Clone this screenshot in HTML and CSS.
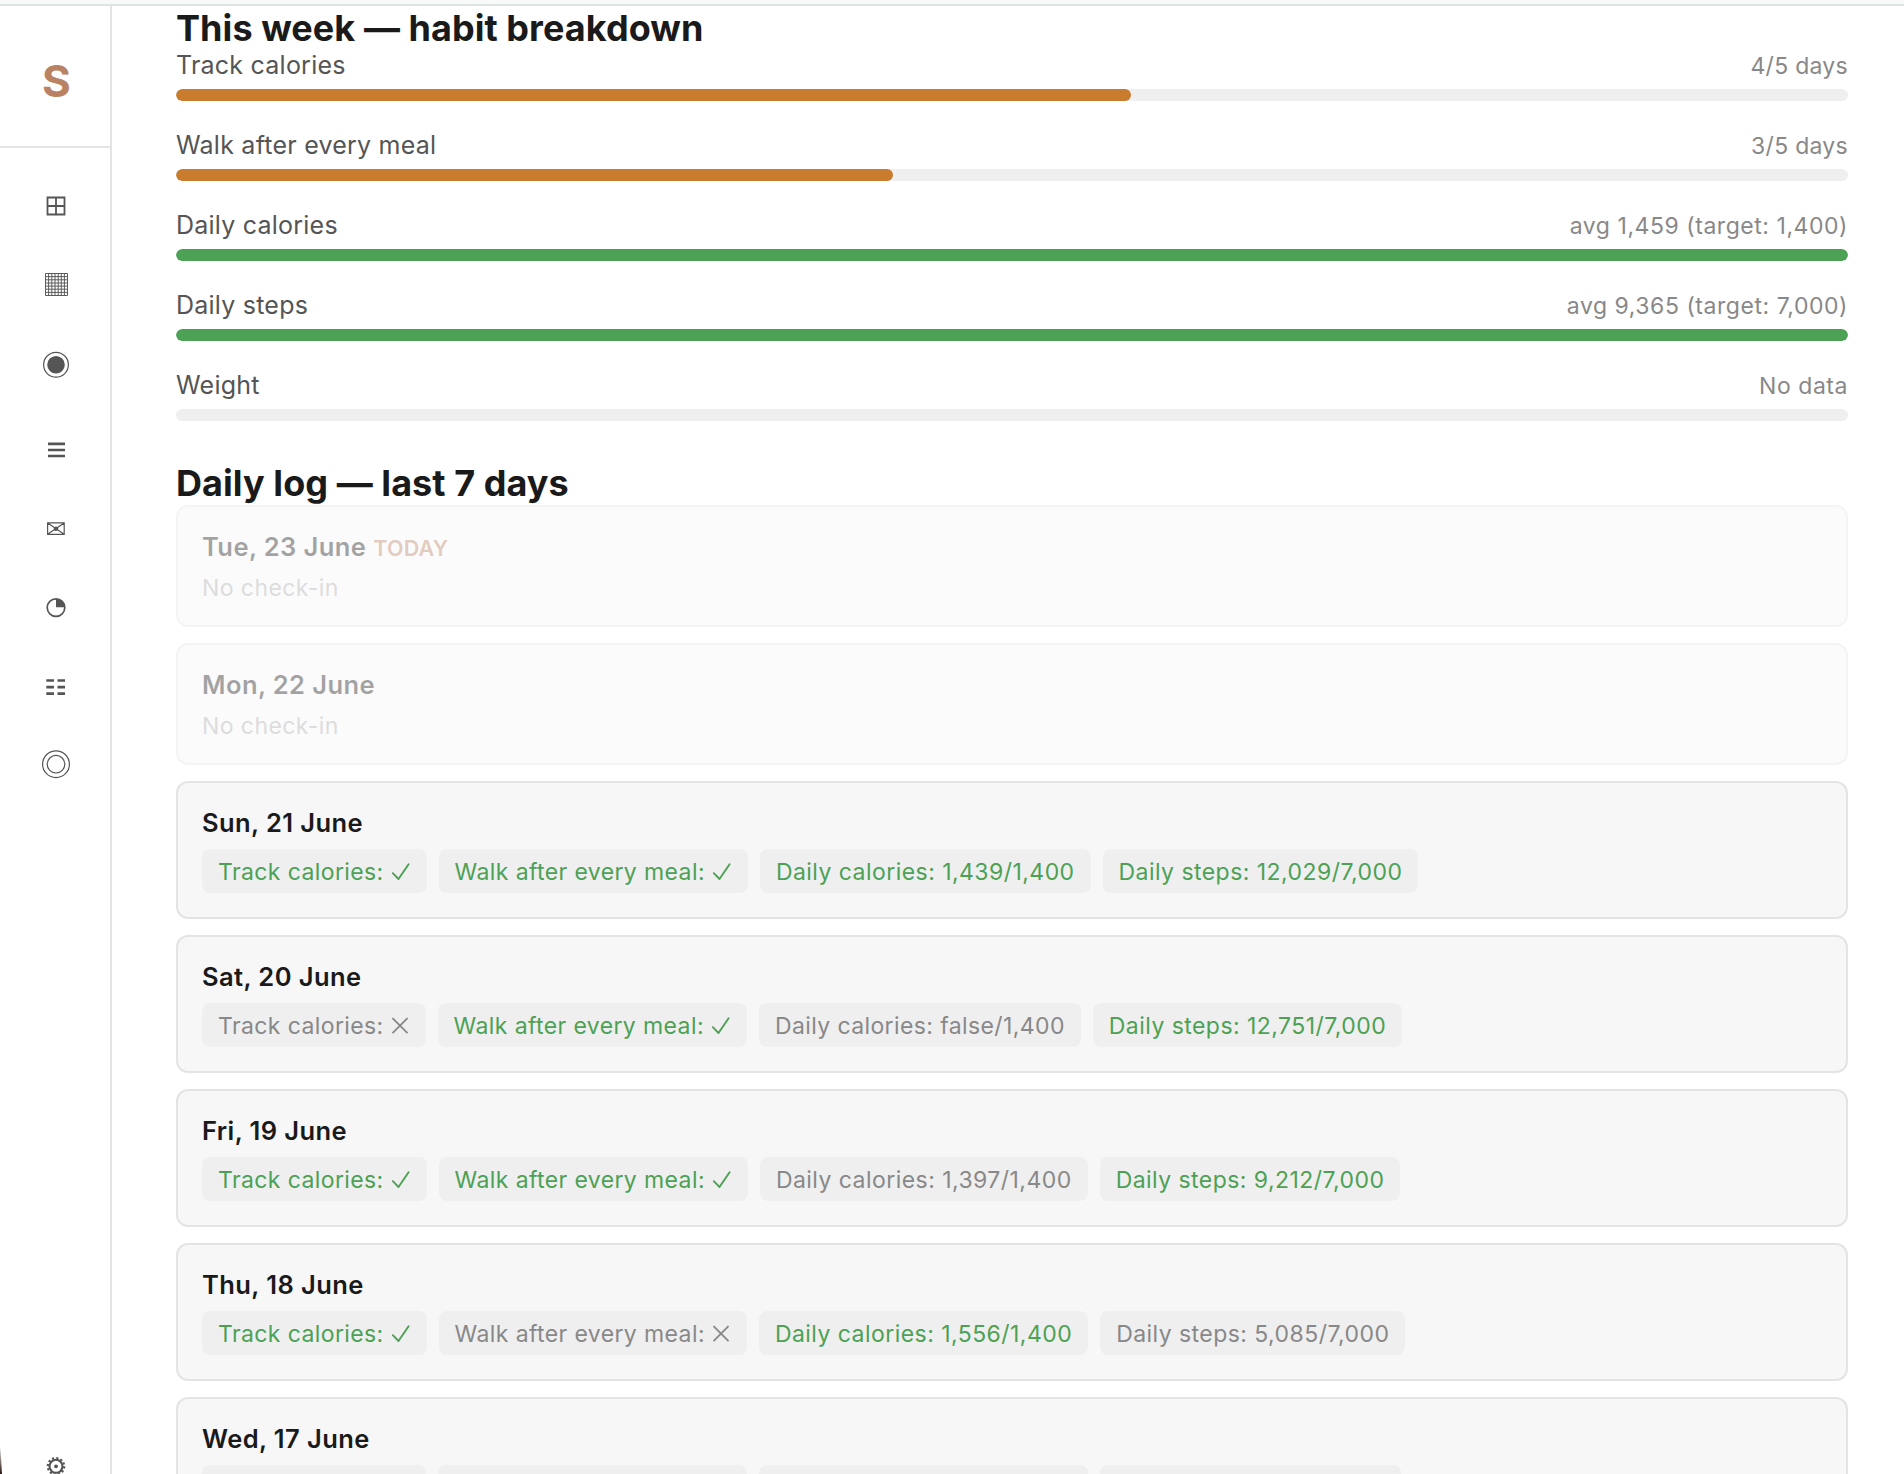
FILE: index.html
```html
<!DOCTYPE html>
<html lang="en">
<head>
<meta charset="utf-8">
<title>Habit breakdown</title>
<link rel="stylesheet" href="styles.css">
</head>
<body>
<svg class="defs" width="0" height="0">
  <symbol id="check" viewBox="0 0 20 44"><path d="M1.800 24.200L7.500 30L17.600 15.200" fill="none" stroke="currentColor" stroke-width="1.900" stroke-linecap="round" stroke-linejoin="round"/></symbol>
  <symbol id="cross" viewBox="0 0 19 44"><path d="M2 15.600L16 29.600M16 15.600L2 29.600" fill="none" stroke="currentColor" stroke-width="1.900" stroke-linecap="round"/></symbol>
</svg>
<div class="topbar"></div>
<div class="app">
  <aside class="sidebar">
    <div class="logo">S</div>
    <nav class="nav">
      <svg class="nav-icon" viewBox="0 0 110 80"><path d="M47.500 31.500h17v17h-17zM56 31.500v17M47.500 40h17" fill="none" stroke="#555" stroke-width="1.800"/></svg>
      <svg class="nav-icon" viewBox="0 0 110 80"><path d="M45.500 27.500h22v22h-22zM48.600 27.500v22M51.800 27.500v22M55 27.500v22M58.200 27.500v22M61.300 27.500v22M64.400 27.500v22M45.500 30.600h22M45.500 33.800h22M45.500 37h22M45.500 40.100h22M45.500 43.200h22M45.500 46.400h22" fill="none" stroke="#555" stroke-width=".95"/></svg>
      <svg class="nav-icon" viewBox="0 0 110 80"><circle cx="56" cy="38.800" r="12.400" fill="none" stroke="#555" stroke-width="1.200"/><circle cx="56" cy="38.800" r="8.800" fill="#555"/></svg>
      <svg class="nav-icon" viewBox="0 0 110 80"><path d="M48 37.800h17M48 44h17M48 50h17" stroke="#555" stroke-width="2.700"/></svg>
      <svg class="nav-icon" viewBox="0 0 110 80"><path d="M47.600 36.900h16.600v11.400H47.600zM47.600 36.900l16.600 11.400M64.200 36.900L47.600 48.300" fill="none" stroke="#555" stroke-width="1.200"/><circle cx="56" cy="42.700" r="2.300" fill="#555"/></svg>
      <svg class="nav-icon" viewBox="0 0 110 80"><circle cx="56" cy="41.600" r="8.800" fill="none" stroke="#555" stroke-width="1.700"/><path d="M56 41.200V32.700a8.900 8.900 0 0 1 8.900 8.500z" fill="#555"/></svg>
      <svg class="nav-icon" viewBox="0 0 110 80"><path d="M46.300 34.500h7.700M57.500 34.500h7.500M46.300 41.100h7.700M57.500 41.100h7.500M46.300 47.600h7.700M57.500 47.600h7.500" stroke="#555" stroke-width="2.700"/></svg>
      <svg class="nav-icon" viewBox="0 0 110 80"><g fill="none" stroke="#555" stroke-width="1.200"><circle cx="56" cy="38.200" r="13.400"/><circle cx="56" cy="38.200" r="8.800"/></g></svg>
    </nav>
    <svg class="gear" viewBox="0 0 110 24"><g fill="none" stroke="#555"><circle cx="56" cy="16.300" r="6.500" stroke-width="2.100"/><circle cx="56" cy="16.300" r="8.200" stroke-width="2.200" stroke-dasharray="2.150 2.143"/></g><circle cx="56" cy="16.300" r="1.900" fill="#555"/></svg>
  </aside>
  <main class="content">
    <h2 class="title">This week — habit breakdown</h2>
    <section class="habits">
      <div class="habit"><div class="habit-row"><span>Track calories</span><span class="value days">4/5 days</span></div><div class="bar"><div class="fill orange" style="width:57.1%"></div></div></div>
      <div class="habit"><div class="habit-row"><span>Walk after every meal</span><span class="value days">3/5 days</span></div><div class="bar"><div class="fill orange" style="width:42.9%"></div></div></div>
      <div class="habit"><div class="habit-row"><span>Daily calories</span><span class="value">avg 1,459 (target: 1,400)</span></div><div class="bar"><div class="fill green" style="width:100%"></div></div></div>
      <div class="habit"><div class="habit-row"><span>Daily steps</span><span class="value">avg 9,365 (target: 7,000)</span></div><div class="bar"><div class="fill green" style="width:100%"></div></div></div>
      <div class="habit"><div class="habit-row"><span>Weight</span><span class="value">No data</span></div><div class="bar"></div></div>
    </section>
    <h2 class="title">Daily log — last 7 days</h2>
    <section class="log">
      <article class="card empty"><div class="date">Tue, 23 June <span class="today">TODAY</span></div><div class="none">No check-in</div></article>
      <article class="card empty"><div class="date">Mon, 22 June</div><div class="none">No check-in</div></article>
      <article class="card"><div class="date">Sun, 21 June</div><div class="chips"><span class="chip ok">Track calories: <svg class="mark"><use href="#check"/></svg></span><span class="chip ok">Walk after every meal: <svg class="mark"><use href="#check"/></svg></span><span class="chip num ok">Daily calories: 1,439/1,400</span><span class="chip num ok">Daily steps: 12,029/7,000</span></div></article>
      <article class="card"><div class="date">Sat, 20 June</div><div class="chips"><span class="chip">Track calories: <svg class="mark x"><use href="#cross"/></svg></span><span class="chip ok">Walk after every meal: <svg class="mark"><use href="#check"/></svg></span><span class="chip">Daily calories: false/1,400</span><span class="chip num ok">Daily steps: 12,751/7,000</span></div></article>
      <article class="card"><div class="date">Fri, 19 June</div><div class="chips"><span class="chip ok">Track calories: <svg class="mark"><use href="#check"/></svg></span><span class="chip ok">Walk after every meal: <svg class="mark"><use href="#check"/></svg></span><span class="chip num">Daily calories: 1,397/1,400</span><span class="chip num ok">Daily steps: 9,212/7,000</span></div></article>
      <article class="card"><div class="date">Thu, 18 June</div><div class="chips"><span class="chip ok">Track calories: <svg class="mark"><use href="#check"/></svg></span><span class="chip">Walk after every meal: <svg class="mark x"><use href="#cross"/></svg></span><span class="chip num ok">Daily calories: 1,556/1,400</span><span class="chip num">Daily steps: 5,085/7,000</span></div></article>
      <article class="card"><div class="date">Wed, 17 June</div><div class="chips"><span class="chip" style="width:224px"></span><span class="chip" style="width:309px"></span><span class="chip" style="width:329px"></span><span class="chip" style="width:301px"></span></div></article>
    </section>
  </main>
</div>
<div class="corner"></div>
</body>
</html>
```
FILE: styles.css
```css
* { box-sizing: border-box; }
body {
  margin: 0;
  height: 1474px;
  overflow: hidden;
  display: flex;
  flex-direction: column;
  background: #fff;
  color: #1a1a1a;
  font-family: Inter, "Liberation Sans", sans-serif;
}
.defs { position: absolute; }
.topbar { flex: none; height: 6px; background: #f7faf8; border-bottom: 2px solid #dde5e0; }
.app { flex: 1; min-height: 0; display: flex; }
.sidebar { flex: none; width: 112px; border-right: 2px solid #e4e4e4; display: flex; flex-direction: column; }
.logo {
  height: 142px;
  padding: 47px 0 0 3px;
  border-bottom: 2px solid #e4e4e4;
  text-align: center;
  font-size: 44px;
  line-height: 56px;
  font-weight: 700;
  color: #b98262;
}
.nav { display: flex; flex-direction: column; padding-top: 18px; }
.nav-icon { display: block; width: 110px; height: 80px; }
.gear { display: block; width: 110px; height: 24px; margin-top: auto; }
.content { flex: 1; min-width: 0; padding: 0 56px 0 64px; overflow: hidden; }
.title { margin: 0; height: 44px; font-size: 36px; line-height: 44px; font-weight: 700; letter-spacing: 0.06px; }
.habits { display: flex; flex-direction: column; gap: 28px; margin-bottom: 39px; }
.habit { height: 52px; }
.habit-row { display: flex; justify-content: space-between; align-items: baseline; height: 39px; font-size: 25px; line-height: 30px; letter-spacing: 0.23px; color: #555; }
.value { font-size: 23px; color: #888; letter-spacing: 0.54px; }
.value.days { letter-spacing: 0.28px; }
.bar { height: 12px; border-radius: 6px; background: #efefef; overflow: hidden; }
.fill { height: 100%; border-radius: 6px; }
.orange { background: #c97b2e; }
.green { background: #4ca154; }
.log { display: flex; flex-direction: column; gap: 16px; }
.card { flex: none; height: 138px; padding: 24px; border: 2px solid #e4e4e4; border-radius: 12px; background: #f7f7f7; }
.card.empty { height: 122px; opacity: .4; }
.date { height: 42px; font-size: 25.5px; line-height: 32px; font-weight: 600; letter-spacing: 0.42px; }
.today { font-size: 21.5px; font-weight: 600; letter-spacing: 0.2px; color: #b98262; }
.none { font-size: 23px; line-height: 30px; letter-spacing: 0.42px; color: #aaa; }
.chips { display: flex; gap: 12px; }
.chip { display: flex; gap: 7px; height: 44px; padding: 0 16px; border-radius: 8px; background: #efefef; font-size: 23px; line-height: 46px; letter-spacing: 0.39px; color: #888; white-space: nowrap; }
.chip.num { letter-spacing: 0.45px; }
.chip.ok { color: #4ca154; }
.mark { width: 20px; height: 44px; }
.mark.x { width: 19px; }
.corner {
  position: absolute;
  left: 0;
  bottom: 0;
  width: 2px;
  height: 30px;
  background: linear-gradient(to bottom, transparent, #2a1512);
  clip-path: polygon(0 0, 40% 30%, 100% 100%, 0 100%);
}
```
